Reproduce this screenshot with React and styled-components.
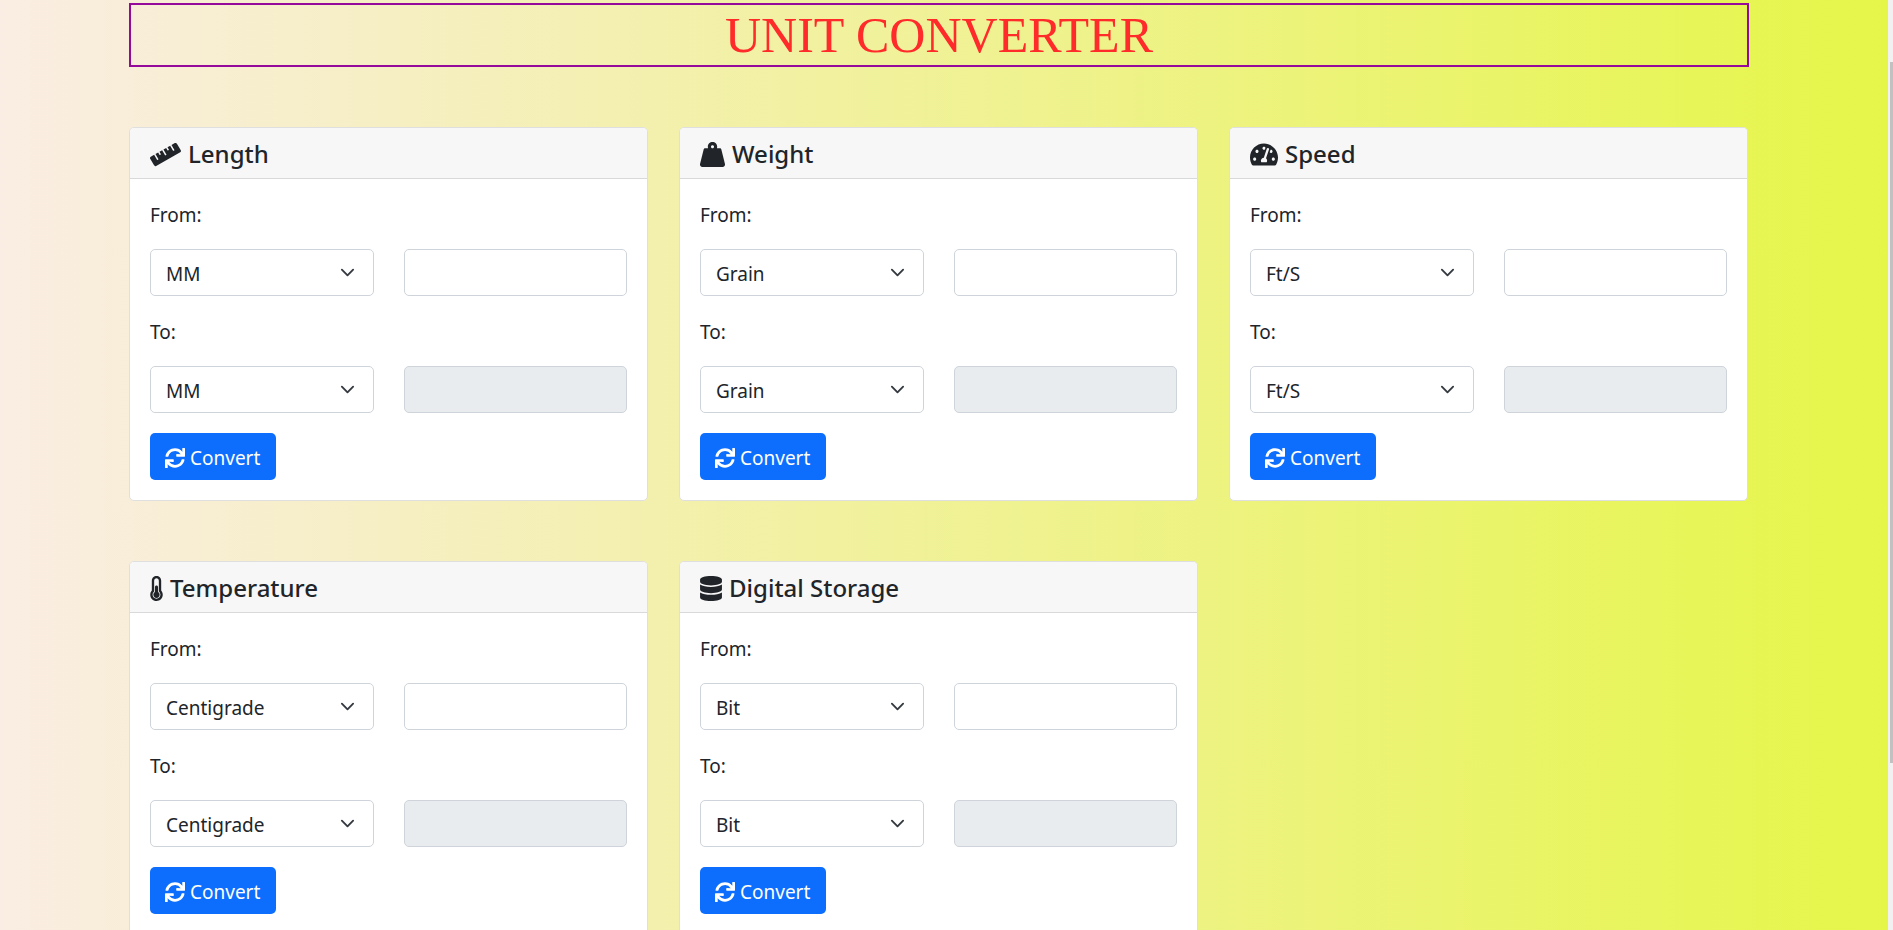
import React, { useId } from "react";
import styled, { createGlobalStyle } from "styled-components";
import {
  FaRuler,
  FaWeightHanging,
  FaTachometerAlt,
  FaThermometerHalf,
  FaDatabase,
  FaSync,
} from "react-icons/fa";

const GlobalStyle = createGlobalStyle`
  *, *::before, *::after { box-sizing: border-box; }
  body {
    margin: 0;
    color: #212529;
    font-family: "Segoe UI", "Noto Sans", "Open Sans", sans-serif;
    font-size: 19px;
    line-height: 30px;
  }
`;

const Window = styled.div`
  display: flex;
  height: 100vh;
  overflow: hidden;
`;

const Page = styled.main`
  flex: 1;
  min-width: 0;
  overflow-y: auto;
  scrollbar-width: none;
  padding: 3px 139px 60px 129px;
  background: linear-gradient(to right, #faede3, #e6f649);
`;

const ScrollTrack = styled.div`
  flex: none;
  width: 5px;
  padding: 62px 0 0 2px;
  background: #f1f1f1;
`;

const ScrollThumb = styled.div`
  height: 701px;
  max-height: 81%;
  background: #c1c1c1;
`;

const Title = styled.h1`
  margin: 0 0 60px;
  border: 2px solid #960a9b;
  color: #ff2a2a;
  font-family: "Times New Roman", "Liberation Serif", serif;
  font-size: 50px;
  font-weight: 400;
  line-height: 60px;
  text-align: center;
`;

const Converters = styled.div`
  display: grid;
  grid-template-columns: repeat(3, minmax(0, 1fr));
  gap: 60px 31px;
  padding-right: 1px;
`;

const Card = styled.section`
  border: 1px solid #dfdfdf;
  border-radius: 5px;
  background: #fff;
  overflow: hidden;
`;

const CardHeader = styled.h2`
  display: flex;
  align-items: center;
  gap: 7px;
  margin: 0;
  padding: 11px 20px 9px;
  border-bottom: 1px solid #d8d9da;
  background: #f7f7f7;
  font-size: 24px;
  font-weight: 500;
  line-height: 30px;
`;

const HeaderIcon = styled.span`
  display: flex;
  flex: none;

  svg {
    width: ${(p) => p.$width}px;
    height: 25px;
  }
`;

const CardBody = styled.form`
  display: flex;
  flex-direction: column;
  align-items: stretch;
  gap: 20px;
  padding: 20px;
`;

const Label = styled.label`
  align-self: flex-start;
  height: 30px;
  line-height: 32px;
`;

const Fields = styled.div`
  display: grid;
  grid-template-columns: repeat(2, minmax(0, 1fr));
  gap: 30px;
`;

const SelectBox = styled.div`
  position: relative;
  display: grid;
`;

const Select = styled.select`
  appearance: none;
  width: 100%;
  height: 47px;
  padding: 2px 45px 0 15px;
  border: 1px solid #ced4da;
  border-radius: 5px;
  background: #fff;
  color: inherit;
  font: inherit;
`;

const Chevron = styled.svg`
  position: absolute;
  top: 16px;
  right: 19px;
  width: 15px;
  height: 15px;
  pointer-events: none;
`;

const Input = styled.input`
  width: 100%;
  height: 47px;
  padding: 0 15px;
  border: 1px solid #ced4da;
  border-radius: 5px;
  background: ${(p) => (p.readOnly ? "#e9ecef" : "#fff")};
  color: inherit;
  font: inherit;
`;

const Button = styled.button`
  display: flex;
  align-items: center;
  gap: 5px;
  align-self: flex-start;
  height: 47px;
  padding: 2px 16px 0 15px;
  border: 0;
  border-radius: 5px;
  background: #0d6efd;
  color: #fff;
  font: inherit;

  svg {
    width: 20px;
    height: 20px;
  }
`;

const converters = [
  { title: "Length", Icon: FaRuler, iconWidth: 31, unit: "MM" },
  { title: "Weight", Icon: FaWeightHanging, iconWidth: 25, unit: "Grain" },
  { title: "Speed", Icon: FaTachometerAlt, iconWidth: 28, unit: "Ft/S" },
  { title: "Temperature", Icon: FaThermometerHalf, iconWidth: 13, unit: "Centigrade" },
  { title: "Digital Storage", Icon: FaDatabase, iconWidth: 22, unit: "Bit" },
];

function UnitField({ label, title, unit, readOnly }) {
  const id = useId();
  return (
    <>
      <Label htmlFor={id}>{label}:</Label>
      <Fields>
        <SelectBox>
          <Select id={id} defaultValue={unit}>
            <option>{unit}</option>
          </Select>
          <Chevron viewBox="0 0 16 16" aria-hidden="true">
            <path
              d="M2 5l6 6 6-6"
              fill="none"
              stroke="#343a40"
              strokeWidth="2"
              strokeLinecap="round"
              strokeLinejoin="round"
            />
          </Chevron>
        </SelectBox>
        <Input type="text" readOnly={readOnly} aria-label={`${title} ${label}`} />
      </Fields>
    </>
  );
}

function Converter({ title, Icon, iconWidth, unit }) {
  return (
    <Card>
      <CardHeader>
        <HeaderIcon $width={iconWidth}>
          <Icon aria-hidden="true" />
        </HeaderIcon>
        {title}
      </CardHeader>
      <CardBody>
        <UnitField label="From" title={title} unit={unit} />
        <UnitField label="To" title={title} unit={unit} readOnly />
        <Button type="button">
          <FaSync aria-hidden="true" />
          Convert
        </Button>
      </CardBody>
    </Card>
  );
}

export default function App() {
  return (
    <>
      <GlobalStyle />
      <Window>
        <Page>
          <Title>UNIT CONVERTER</Title>
          <Converters>
            {converters.map((c) => (
              <Converter key={c.title} {...c} />
            ))}
          </Converters>
        </Page>
        <ScrollTrack aria-hidden="true">
          <ScrollThumb />
        </ScrollTrack>
      </Window>
    </>
  );
}
